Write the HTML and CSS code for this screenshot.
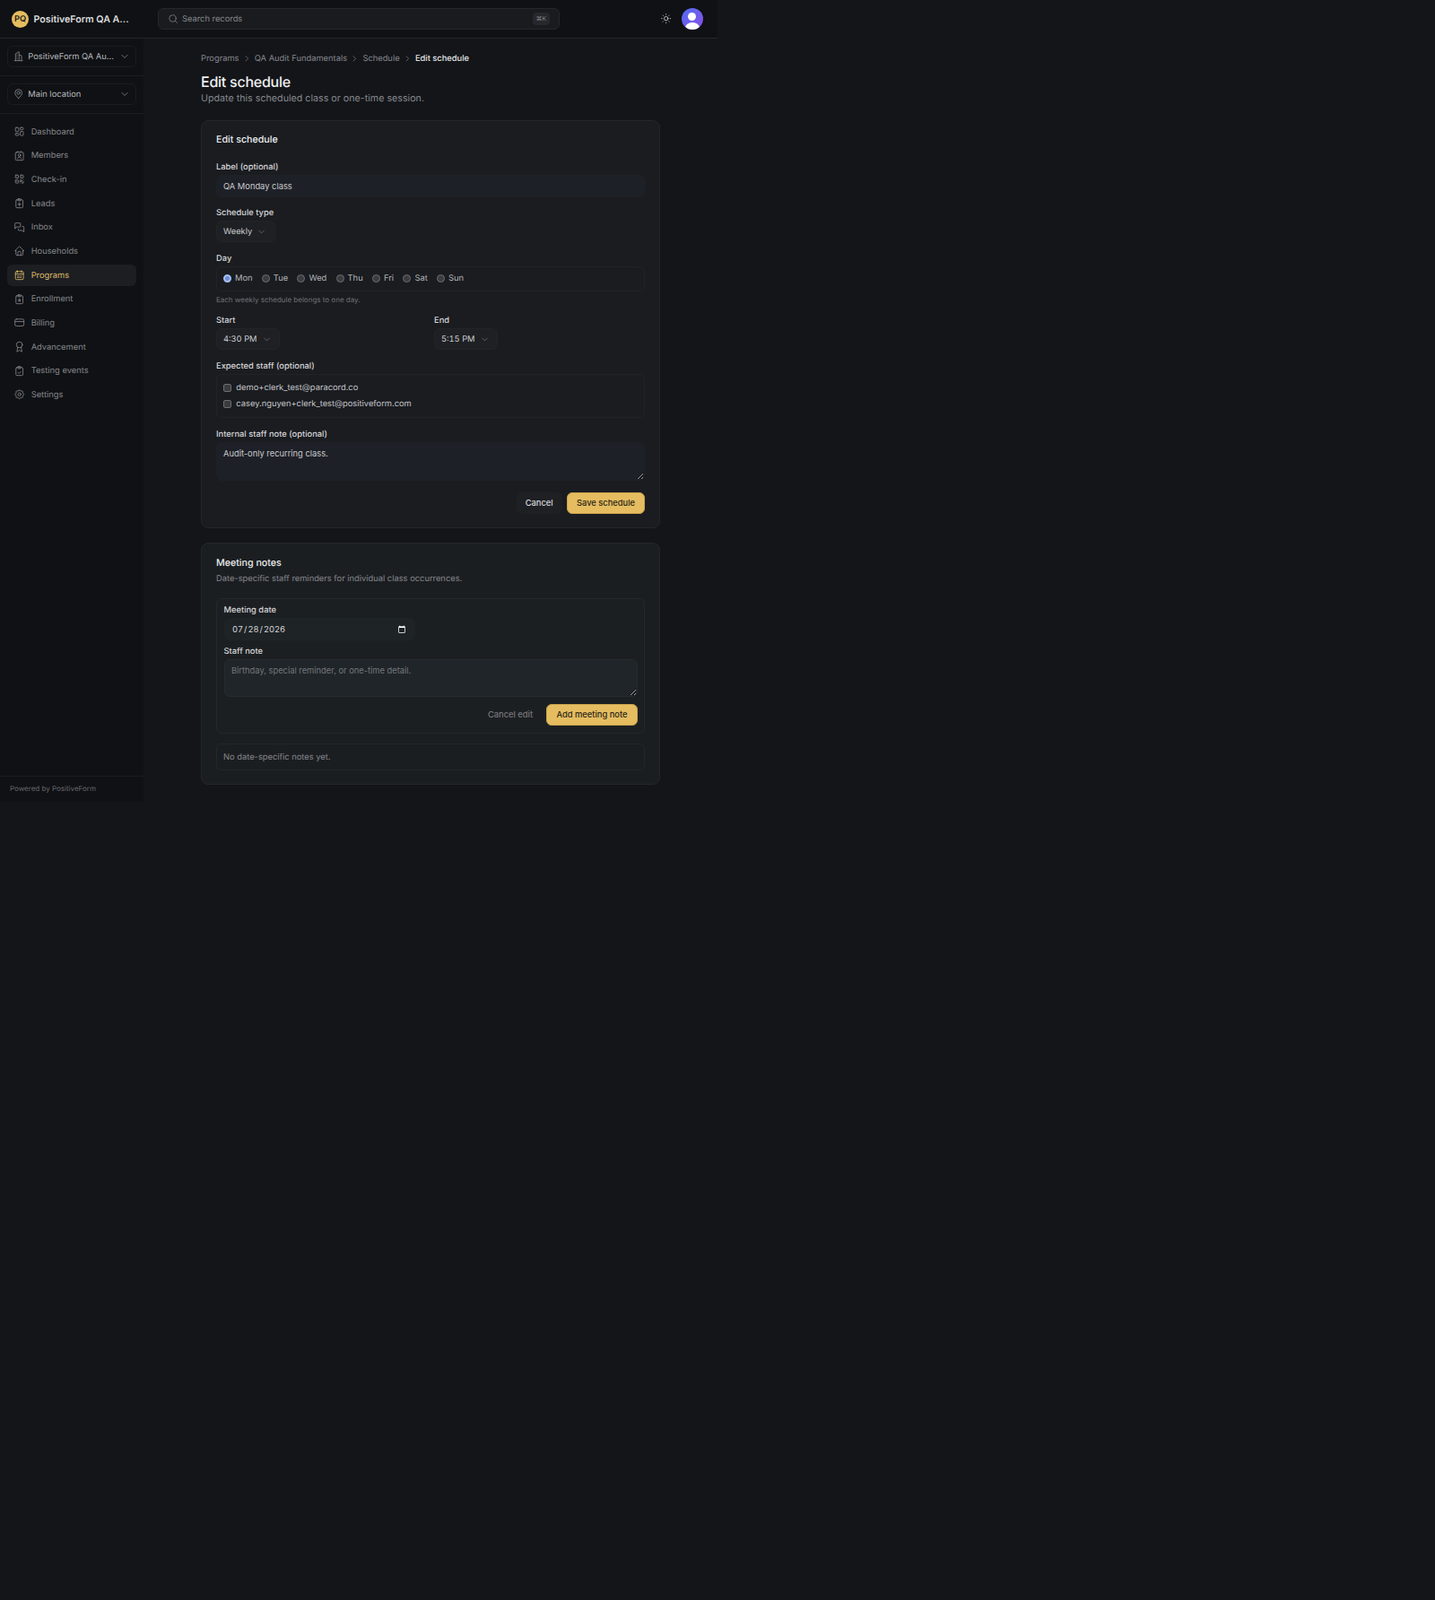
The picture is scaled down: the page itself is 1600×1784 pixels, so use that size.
FILE: index.html
```html
<!DOCTYPE html>
<html lang="en">
<head>
    <meta charset="UTF-8">
    <meta name="viewport" content="width=device-width, initial-scale=1.0">
    <title>Edit schedule</title>
    <link rel="stylesheet" href="styles.css">
</head>
<body>
    <div class="app">
        <header class="topbar">
            <div class="brand">
                <span class="brand-logo">PQ</span>
                <span class="brand-name">PositiveForm QA A...</span>
            </div>
            <div class="search">
                <svg class="icon search-icon" viewBox="0 0 24 24"><circle cx="11" cy="11" r="7.5"/><path d="M21 21l-4.5-4.5"/></svg>
                <span class="search-text">Search records</span>
                <span class="kbd">⌘K</span>
            </div>
            <div class="top-actions">
                <svg class="icon sun" viewBox="0 0 24 24"><circle cx="12" cy="12" r="4"/><path d="M3 12h1M20 12h1M12 3v1M12 20v1M5.6 5.6l.7.7M17.7 17.7l.7.7M5.6 18.4l.7-.7M17.7 6.3l.7-.7"/></svg>
                <span class="avatar"><span class="avatar-head"></span><span class="avatar-body"></span></span>
            </div>
        </header>

        <div class="shell">
            <aside class="sidebar">
                <div class="switch-wrap">
                    <div class="switcher">
                        <svg class="icon" viewBox="0 0 24 24"><path d="M4 21h16M6 21V7l7-4v18M13 9l5 2v10M9 9v.01M9 12v.01M9 15v.01M9 18v.01"/></svg>
                        <span class="switch-text">PositiveForm QA Au...</span>
                        <svg class="icon chev" viewBox="0 0 24 24"><path d="M6 9l6 6 6-6"/></svg>
                    </div>
                </div>
                <div class="switch-wrap">
                    <div class="switcher">
                        <svg class="icon" viewBox="0 0 24 24"><circle cx="12" cy="10" r="3"/><path d="M12 21c-4-4.5-7-7.5-7-11a7 7 0 0 1 14 0c0 3.5-3 6.5-7 11z"/></svg>
                        <span class="switch-text">Main location</span>
                        <svg class="icon chev" viewBox="0 0 24 24"><path d="M6 9l6 6 6-6"/></svg>
                    </div>
                </div>

                <nav class="nav">
                    <a class="nav-item">
                        <svg class="icon" viewBox="0 0 24 24"><rect x="4" y="4" width="6.5" height="8" rx="1.5"/><rect x="4" y="15.5" width="6.5" height="4.5" rx="1.5"/><rect x="13.5" y="12" width="6.5" height="8" rx="1.5"/><rect x="13.5" y="4" width="6.5" height="4.5" rx="1.5"/></svg>
                        Dashboard
                    </a>
                    <a class="nav-item">
                        <svg class="icon" viewBox="0 0 24 24"><rect x="4" y="5" width="16" height="16" rx="2"/><path d="M9 3v2M15 3v2M8 18c.6-2 2-3 4-3s3.4 1 4 3"/><circle cx="12" cy="11" r="2.5"/></svg>
                        Members
                    </a>
                    <a class="nav-item">
                        <svg class="icon" viewBox="0 0 24 24"><rect x="4" y="4" width="6" height="6" rx="1"/><rect x="14" y="4" width="6" height="6" rx="1"/><rect x="4" y="14" width="6" height="6" rx="1"/><path d="M14 14h3v3h-3zM20 14v.01M14 20h.01M20 17v3h-3M7 7v.01M17 7v.01M7 17v.01"/></svg>
                        Check-in
                    </a>
                    <a class="nav-item">
                        <svg class="icon" viewBox="0 0 24 24"><rect x="5" y="5" width="14" height="16" rx="2"/><rect x="9" y="3" width="6" height="4" rx="1"/><path d="M12 11v6M9 14h6"/></svg>
                        Leads
                    </a>
                    <a class="nav-item">
                        <svg class="icon" viewBox="0 0 24 24"><path d="M3 14V4a1 1 0 0 1 1-1h9a1 1 0 0 1 1 1v6a1 1 0 0 1-1 1H6z"/><path d="M10 15v2a1 1 0 0 0 1 1h7l3 3V11a1 1 0 0 0-1-1h-2"/></svg>
                        Inbox
                    </a>
                    <a class="nav-item">
                        <svg class="icon" viewBox="0 0 24 24"><path d="M5 12H3l9-9 9 9h-2"/><path d="M5 12v7a2 2 0 0 0 2 2h10a2 2 0 0 0 2-2v-7"/><path d="M9 21v-6a2 2 0 0 1 2-2h2a2 2 0 0 1 2 2v6"/></svg>
                        Households
                    </a>
                    <a class="nav-item active">
                        <svg class="icon" viewBox="0 0 24 24"><rect x="4" y="5" width="16" height="16" rx="2"/><path d="M8 3v4M16 3v4M4 10h16M8 14h2M12 14h1M15 14h1M8 17h2M12 17h1M15 17h1"/></svg>
                        Programs
                    </a>
                    <a class="nav-item">
                        <svg class="icon" viewBox="0 0 24 24"><rect x="5" y="5" width="14" height="16" rx="2"/><rect x="9" y="3" width="6" height="4" rx="1"/><path d="M12 11.5l.8 1.7 1.7.3-1.2 1.2.3 1.8-1.6-.9-1.6.9.3-1.8-1.2-1.2 1.7-.3z"/></svg>
                        Enrollment
                    </a>
                    <a class="nav-item">
                        <svg class="icon" viewBox="0 0 24 24"><rect x="3" y="5" width="18" height="14" rx="3"/><path d="M3 10h18"/></svg>
                        Billing
                    </a>
                    <a class="nav-item">
                        <svg class="icon" viewBox="0 0 24 24"><circle cx="12" cy="8" r="6"/><path d="M15.5 12.9L17 22l-5-3-5 3 1.5-9.1"/></svg>
                        Advancement
                    </a>
                    <a class="nav-item">
                        <svg class="icon" viewBox="0 0 24 24"><rect x="5" y="5" width="14" height="16" rx="2"/><rect x="9" y="3" width="6" height="4" rx="1"/><path d="M9 15l2 2 4-4"/></svg>
                        Testing events
                    </a>
                    <a class="nav-item">
                        <svg class="icon" viewBox="0 0 24 24"><path d="M10.325 4.317c.426-1.756 2.924-1.756 3.35 0a1.724 1.724 0 0 0 2.573 1.066c1.543-.94 3.31.826 2.37 2.37a1.724 1.724 0 0 0 1.065 2.572c1.756.426 1.756 2.924 0 3.35a1.724 1.724 0 0 0-1.066 2.573c.94 1.543-.826 3.31-2.37 2.37a1.724 1.724 0 0 0-2.572 1.065c-.426 1.756-2.924 1.756-3.35 0a1.724 1.724 0 0 0-2.573-1.066c-1.543.94-3.31-.826-2.37-2.37a1.724 1.724 0 0 0-1.065-2.572c-1.756-.426-1.756-2.924 0-3.35a1.724 1.724 0 0 0 1.066-2.573c-.94-1.543.826-3.31 2.37-2.37 1 .608 2.296.07 2.572-1.065z"/><circle cx="12" cy="12" r="3"/></svg>
                        Settings
                    </a>
                </nav>

                <div class="powered">Powered by PositiveForm</div>
            </aside>

            <main class="main">
                <div class="crumbs">
                    <span>Programs</span>
                    <svg class="icon crumb-sep" viewBox="0 0 24 24"><path d="M9 6l6 6-6 6"/></svg>
                    <span>QA Audit Fundamentals</span>
                    <svg class="icon crumb-sep" viewBox="0 0 24 24"><path d="M9 6l6 6-6 6"/></svg>
                    <span>Schedule</span>
                    <svg class="icon crumb-sep" viewBox="0 0 24 24"><path d="M9 6l6 6-6 6"/></svg>
                    <span class="crumb-current">Edit schedule</span>
                </div>
                <h1>Edit schedule</h1>
                <p class="subtitle">Update this scheduled class or one-time session.</p>

                <section class="card">
                    <h2>Edit schedule</h2>
                    <form class="form">
                        <div class="field">
                            <label>Label (optional)</label>
                            <input class="input" type="text" value="QA Monday class">
                        </div>
                        <div class="field">
                            <label>Schedule type</label>
                            <div class="select">Weekly <svg class="icon" viewBox="0 0 24 24"><path d="M6 9l6 6 6-6"/></svg></div>
                        </div>
                        <div class="field">
                            <label>Day</label>
                            <div class="days">
                                <label class="option"><input type="radio" name="day" checked> Mon</label>
                                <label class="option"><input type="radio" name="day"> Tue</label>
                                <label class="option"><input type="radio" name="day"> Wed</label>
                                <label class="option"><input type="radio" name="day"> Thu</label>
                                <label class="option"><input type="radio" name="day"> Fri</label>
                                <label class="option"><input type="radio" name="day"> Sat</label>
                                <label class="option"><input type="radio" name="day"> Sun</label>
                            </div>
                            <p class="help">Each weekly schedule belongs to one day.</p>
                        </div>
                        <div class="time-grid">
                            <div class="field">
                                <label>Start</label>
                                <div class="select">4:30 PM <svg class="icon" viewBox="0 0 24 24"><path d="M6 9l6 6 6-6"/></svg></div>
                            </div>
                            <div class="field">
                                <label>End</label>
                                <div class="select">5:15 PM <svg class="icon" viewBox="0 0 24 24"><path d="M6 9l6 6 6-6"/></svg></div>
                            </div>
                        </div>
                        <div class="field">
                            <label>Expected staff (optional)</label>
                            <div class="staff">
                                <label class="option"><input type="checkbox"> demo+clerk_test@paracord.co</label>
                                <label class="option"><input type="checkbox"> casey.nguyen+clerk_test@positiveform.com</label>
                            </div>
                        </div>
                        <div class="field">
                            <label>Internal staff note (optional)</label>
                            <textarea class="input note">Audit-only recurring class.</textarea>
                        </div>
                        <div class="actions">
                            <button type="button" class="btn">Cancel</button>
                            <button type="button" class="btn btn-gold">Save schedule</button>
                        </div>
                    </form>
                </section>

                <section class="card card-notes">
                    <h2>Meeting notes</h2>
                    <p class="card-desc">Date-specific staff reminders for individual class occurrences.</p>
                    <form class="note-form">
                        <div class="field">
                            <label>Meeting date</label>
                            <input class="input date" type="date" value="2026-07-28">
                        </div>
                        <div class="field">
                            <label>Staff note</label>
                            <textarea class="input staff-note" placeholder="Birthday, special reminder, or one-time detail."></textarea>
                        </div>
                        <div class="actions">
                            <button type="button" class="btn btn-muted">Cancel edit</button>
                            <button type="button" class="btn btn-gold">Add meeting note</button>
                        </div>
                    </form>
                    <div class="empty">No date-specific notes yet.</div>
                </section>
            </main>
        </div>
    </div>
</body>
</html>
```

FILE: styles.css
```css
:root {
    --page: #131519;
    --side: #0f1114;
    --card: #1a1c20;
    --line: #24262b;
    --text: #e8e8ea;
    --muted: #85878c;
    --gold: #e5bd60;
}

* {
    box-sizing: border-box;
    margin: 0;
    padding: 0;
    font-family: 'Inter', sans-serif;
}

html {
    color-scheme: dark;
}

body {
    background: var(--page);
    color: var(--text);
    font-size: 9.33px;
    text-rendering: geometricPrecision;
    min-height: 100vh;
}

.app {
    width: 800px;
}

.icon {
    width: 13.33px;
    height: 13.33px;
    flex: none;
    fill: none;
    stroke: currentColor;
    stroke-width: 1.5;
    stroke-linecap: round;
    stroke-linejoin: round;
}

/* top bar */
.topbar {
    display: flex;
    align-items: center;
    height: 43px;
    background: var(--side);
    border-bottom: 1px solid #24262a;
}

.brand {
    display: flex;
    align-items: center;
    gap: 5.5px;
    width: 176px;
    padding-left: 13px;
}

.brand-logo {
    display: flex;
    align-items: center;
    justify-content: center;
    width: 19px;
    height: 19px;
    border-radius: 50%;
    background: var(--gold);
    color: #1a1a1a;
    font-size: 9.33px;
    font-weight: 600;
}

.brand-name {
    font-size: 10.67px;
    font-weight: 600;
    color: #dcdcde;
}

.search {
    display: flex;
    align-items: center;
    gap: 4.5px;
    width: 448px;
    height: 24px;
    padding: 0 10px 0 9.5px;
    background: #191b1e;
    border: 1px solid #25272b;
    border-radius: 6px;
    color: var(--muted);
}

.search-icon {
    width: 12px;
    height: 12px;
}

.search-text {
    flex: 1;
}

.kbd {
    padding: 3px 4px;
    border-radius: 4px;
    background: #26282c;
    font-size: 6.67px;
    line-height: 8px;
}

.top-actions {
    display: flex;
    align-items: center;
    gap: 10.33px;
    margin-left: 112.33px;
}

.sun {
    color: #d0d0d2;
}

.avatar {
    position: relative;
    width: 24px;
    height: 24px;
    border-radius: 50%;
    overflow: hidden;
    background: linear-gradient(135deg, #4f6ef0, #8b4fe6);
}

.avatar-head {
    position: absolute;
    left: 7.5px;
    top: 5px;
    width: 9px;
    height: 9px;
    border-radius: 50%;
    background: #fff;
}

.avatar-body {
    position: absolute;
    left: 4px;
    top: 16px;
    width: 16px;
    height: 12px;
    border-radius: 50%;
    background: #fff;
}

/* sidebar */
.shell {
    display: flex;
    height: 851px;
}

.sidebar {
    display: flex;
    flex-direction: column;
    flex: none;
    width: 160px;
    background: var(--side);
}

.switch-wrap {
    padding: 8px 8px 9px;
    border-bottom: 1px solid #1b1d20;
}

.switcher {
    display: flex;
    align-items: center;
    gap: 4.33px;
    height: 24px;
    padding: 0 5.7px 0 4.67px;
    border: 1px solid #1a1c1f;
    border-radius: 6px;
    color: #b8b9bc;
}

.switcher > .icon:first-child {
    color: var(--muted);
}

.switch-text {
    flex: 1;
    padding-top: 1px;
    white-space: nowrap;
}

.chev {
    width: 12px;
    height: 12px;
    color: #8f9094;
}

.nav {
    display: flex;
    flex-direction: column;
    gap: 2.67px;
    padding: 8.33px 8px;
}

.nav-item {
    display: flex;
    align-items: center;
    gap: 6.67px;
    height: 24px;
    padding: 0 6.67px;
    border-radius: 6px;
    color: var(--muted);
}

.nav-item .icon {
    margin-top: -1px;
}

.nav-item.active {
    background: #1c1e22;
    color: #dcbb6a;
}

.powered {
    margin-top: auto;
    padding: 8px 11px;
    height: 29px;
    border-top: 1px solid #191b1e;
    color: #65676c;
    font-size: 8px;
}

/* main column */
.main {
    flex: 1;
    padding: 16.5px 64px 0;
}

.crumbs {
    display: flex;
    align-items: center;
    gap: 3.33px;
    height: 12px;
    color: var(--muted);
}

.crumb-sep {
    width: 10.67px;
    height: 10.67px;
}

.crumb-current {
    color: #e4e4e6;
    font-weight: 500;
}

h1 {
    margin-top: 9px;
    font-size: 16px;
    line-height: 20px;
    font-weight: 500;
    letter-spacing: -0.25px;
    color: #f0f0f2;
}

.subtitle {
    margin-top: 2.5px;
    line-height: 14px;
    font-size: 10.67px;
    letter-spacing: 0.02px;
    color: var(--muted);
}

.card {
    margin-top: 17px;
    padding: 14px 16px 15px;
    background: var(--card);
    border: 1px solid var(--line);
    border-radius: 8px;
}

.card-notes {
    margin-top: 16px;
    padding-top: 15px;
    padding-bottom: 15px;
    background: #1b1e21;
}

h2 {
    font-size: 10.67px;
    line-height: 14px;
    font-weight: 500;
    color: #ecedee;
}

.form {
    display: flex;
    flex-direction: column;
    gap: 11.33px;
    margin-top: 17px;
}

.field > label {
    display: block;
    height: 13px;
    margin-bottom: 2px;
    line-height: 14.5px;
    font-size: 9.33px;
    font-weight: 500;
    color: #d6d6d8;
}

.input {
    display: block;
    width: 100%;
    height: 25px;
    padding: 0 7px;
    background: #1e2027;
    border: 1px solid #1f2128;
    border-radius: 6px;
    color: #c9cacc;
    font-size: 9.33px;
}

.select {
    display: inline-flex;
    align-items: center;
    gap: 5px;
    height: 24px;
    padding: 0 8.5px 0 7px;
    background: #1e2024;
    border: 1px solid #222428;
    border-radius: 6px;
    color: #c9cacc;
    font-variant-numeric: tabular-nums;
}

.select .icon {
    width: 11px;
    height: 11px;
    color: #77797d;
}

.days {
    display: flex;
    align-items: center;
    gap: 10.3px;
    height: 28px;
    padding: 0 7px;
    border: 1px solid #212327;
    border-radius: 6px;
}

.option {
    display: flex;
    align-items: center;
    gap: 4px;
    color: #b4b5b8;
}

.option input {
    appearance: none;
    flex: none;
    width: 9px;
    height: 9px;
    background: #3a3c40;
    border: 1px solid #6c6e72;
}

.option input[type=radio] {
    border-radius: 50%;
}

.option input[type=radio]:checked {
    background: #6c8ed8;
    border: 2px solid #a8c0f0;
}

.option input[type=checkbox] {
    border-radius: 2px;
}

.help {
    margin-top: 3.5px;
    line-height: 12px;
    font-size: 8px;
    color: #6f7176;
}

.time-grid {
    display: grid;
    grid-template-columns: repeat(2, 1fr);
    gap: 8px;
}

.staff {
    display: flex;
    flex-direction: column;
    gap: 6px;
    height: 49.5px;
    padding: 8.33px 7px;
    border: 1px solid #212327;
    border-radius: 6px;
}

.staff .option {
    gap: 5.33px;
    height: 12.67px;
    color: #c4c5c8;
}

.note {
    height: 43.5px;
    padding: 6px 7px;
    resize: vertical;
}

.actions {
    display: flex;
    justify-content: flex-end;
    gap: 5.33px;
    margin-top: 1.5px;
}

.btn {
    height: 24px;
    padding: 0 10px;
    background: #1e2024;
    border: none;
    border-radius: 6px;
    color: #d8d8da;
    font-size: 9.33px;
    font-weight: 500;
}

.btn-gold {
    background: var(--gold);
    color: #2a2416;
    border: 1px solid #caa44d;
}

.btn-muted {
    background: #1c1f22;
    color: #76787c;
}

.card-desc {
    margin-top: 4px;
    line-height: 13px;
    color: var(--muted);
}

.note-form {
    display: flex;
    flex-direction: column;
    gap: 6px;
    height: 151px;
    margin-top: 15px;
    padding: 6px 7.5px;
    background: #1c1f22;
    border: 1px solid #25282b;
    border-radius: 6px;
}

.date {
    width: 213px;
    padding-left: 7.5px;
    background: #1e2326;
    border-color: #1f2427;
    color: #d8d8da;
    font-variant-numeric: tabular-nums;
}

.staff-note {
    height: 42px;
    padding: 6px 7.5px;
    background: #20252a;
    border-color: #262b2f;
    resize: vertical;
}

.staff-note::placeholder {
    color: #74777b;
}

.note-form .actions {
    margin-top: 2px;
}

.empty {
    height: 30px;
    margin-top: 11px;
    padding: 0 7px;
    line-height: 29px;
    border: 1px solid #23262a;
    border-radius: 6px;
    color: var(--muted);
}
```
